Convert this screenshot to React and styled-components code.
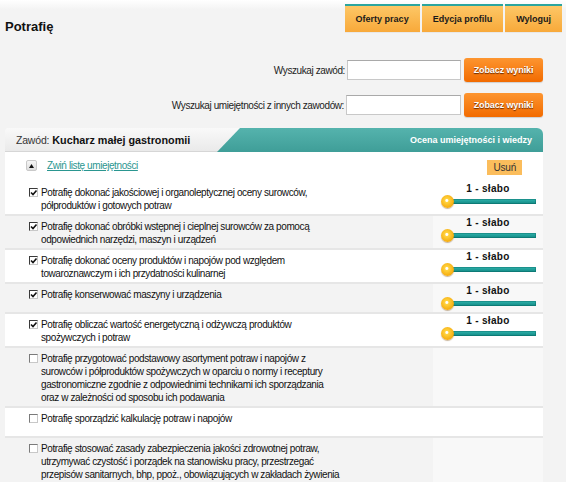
import styled, { createGlobalStyle } from 'styled-components';

const GlobalStyle = createGlobalStyle`
  body {
    margin: 0;
    background: #f3f3f3;
    font-family: 'Liberation Sans', Arial, sans-serif;
    color: #222;
  }
`;

const Page = styled.div`
  min-height: 482px;
  padding-left: 5px;
  background: linear-gradient(#ffffff 0, #f3f3f3 10px);
`;

const TopBar = styled.div`
  display: flex;
  align-items: flex-start;
  padding-top: 4px;
`;

const Title = styled.h1`
  margin: 15px 0 0;
  font-size: 13px;
  line-height: 16px;
  font-weight: bold;
  color: #111;
`;

const Nav = styled.nav`
  display: flex;
  gap: 2px;
  margin-left: auto;
  margin-right: 4px;
`;

const Tab = styled.a`
  display: flex;
  align-items: center;
  height: 26px;
  padding: 0 11px;
  border-top: 2px solid #2ba59e;
  background: linear-gradient(#fdc766, #f8a93a);
  font-size: 9px;
  font-weight: bold;
  color: #1a1a1a;
  box-shadow: 0 1px 0 #e8e8e8;
`;

const Search = styled.div`
  display: flex;
  flex-direction: column;
  gap: 11px;
  margin-top: 23px;
  padding-right: 23px;
`;

const SearchRow = styled.div`
  display: flex;
  justify-content: flex-end;
  align-items: center;
  height: 24px;
`;

const Label = styled.label`
  font-size: 10px;
  letter-spacing: -0.4px;
  color: #222;
`;

const Input = styled.input`
  box-sizing: border-box;
  width: ${(p) => p.$width || 113}px;
  height: 20px;
  margin-left: 2px;
  border: 1px solid #c8c8c8;
  border-top-color: #a9a9a9;
  background: #fff;
`;

const OrangeButton = styled.button`
  width: 79px;
  height: 24px;
  margin-left: 3px;
  border: none;
  border-radius: 3px;
  background: linear-gradient(#fd9530, #f26b00);
  color: #fff;
  font-family: inherit;
  font-size: 9px;
  font-weight: bold;
  letter-spacing: -0.1px;
  text-shadow: 0 1px 1px #6a2a00;
  box-shadow: 0 1px 1px rgba(0, 0, 0, 0.15);
`;

const Panel = styled.section`
  margin: 11px 23px 0 0;
`;

const Header = styled.div`
  display: flex;
  height: 24px;
  border-radius: 3px 5px 0 0;
  background: linear-gradient(#f9f9f9, #e9e9e9);
  box-shadow: inset 0 -1px 0 #d6d6d6;
`;

const Profession = styled.div`
  flex: 1;
  display: flex;
  align-items: center;
  gap: 3px;
  padding-left: 11px;
  font-size: 10.5px;
  letter-spacing: -0.2px;
  color: #333;

  strong {
    font-size: 10.8px;
    letter-spacing: 0;
    color: #111;
  }
`;

const TealTab = styled.div`
  display: flex;
  align-items: center;
  justify-content: flex-end;
  width: 326px;
  padding-right: 11px;
  box-sizing: border-box;
  border-top-right-radius: 6px;
  background: linear-gradient(#55b3ad, #3f9e98);
  clip-path: polygon(23px 0, 100% 0, 100% 100%, 0 100%);
  color: #fff;
  font-size: 9px;
  font-weight: bold;
`;

const Body = styled.div`
  background: #fff;
`;

const ToolRow = styled.div`
  display: flex;
  align-items: flex-start;
  height: 30px;
  box-sizing: border-box;
  padding: 8px 21px 0;
`;

const Toggle = styled.span`
  display: flex;
  align-items: center;
  justify-content: center;
  width: 11px;
  height: 11px;
  box-sizing: border-box;
  border: 1px solid #c9c9c9;
  border-radius: 2px;
  background: linear-gradient(#f6f6f6, #dedede);
`;

const ToggleLink = styled.a`
  margin: -1px 0 0 10px;
  font-size: 10px;
  letter-spacing: -0.4px;
  line-height: 13px;
  color: #2a9690;
  text-decoration: underline;
`;

const RemoveButton = styled.span`
  margin-left: auto;
  padding: 0 6px;
  height: 15px;
  line-height: 15px;
  background: #fbbd5c;
  font-size: 10px;
  letter-spacing: -0.2px;
  color: #333;
`;

const Row = styled.div`
  display: grid;
  grid-template-columns: 1fr 110px;
  background: ${(p) => (p.$shaded ? '#f3f3f3' : '#fff')};
  border-top: ${(p) => (p.$first ? 'none' : '2px solid #e6e6e6')};
  min-height: 28px;
`;

const Skill = styled.label`
  display: flex;
  align-items: flex-start;
  gap: 3px;
  padding: 4px 0 2px 24px;
`;

const Box = styled.span`
  flex: none;
  width: 9px;
  height: 9px;
  margin-top: 2px;
  box-sizing: border-box;
  border: 1px solid ${(p) => (p.$checked ? '#3a3a3a' : '#7a7a7a')};
  border-right-color: #c8c8c8;
  border-bottom-color: #c8c8c8;
  background: #fff;
  position: relative;

  svg {
    position: absolute;
    left: 0;
    top: 0;
  }
`;

const SkillText = styled.span`
  font-size: 10px;
  letter-spacing: -0.4px;
  line-height: 13px;
  color: #111;
  white-space: nowrap;
`;

const Line = styled.span`
  display: block;
`;

const RatingCell = styled.div`
  padding-top: 1px;
  background: ${(p) => (p.$shaded ? '#f8f8f8' : 'transparent')};
`;

const RatingLabel = styled.div`
  text-align: center;
  font-size: 10px;
  font-weight: bold;
  letter-spacing: 0.3px;
  line-height: 12px;
  color: #111;
`;

const Slider = styled.div`
  display: flex;
  align-items: center;
  margin-left: 8px;
  height: 13px;
`;

const Knob = styled.span`
  flex: none;
  width: 13px;
  height: 13px;
  border-radius: 50%;
  background: radial-gradient(circle at 45% 42%, #fff 0 1px, #ffd23e 2px, #f3a000 85%);
  box-shadow: 0 1px 1px rgba(120, 70, 0, 0.4);
  position: relative;
  z-index: 1;
`;

const Track = styled.span`
  width: 83px;
  height: 5px;
  margin-left: -1px;
  background: linear-gradient(#2fb3ad, #128883);
  box-shadow: inset 0 0 0 1px rgba(0, 90, 86, 0.35);
`;

const skills = [
  {
    lines: ['Potrafię dokonać jakościowej i organoleptycznej oceny surowców,', 'półproduktów i gotowych potraw'],
    checked: true,
  },
  {
    lines: ['Potrafię dokonać obróbki wstępnej i cieplnej surowców za pomocą', 'odpowiednich narzędzi, maszyn i urządzeń'],
    checked: true,
  },
  {
    lines: ['Potrafię dokonać oceny produktów i napojów pod względem', 'towaroznawczym i ich przydatności kulinarnej'],
    checked: true,
  },
  { lines: ['Potrafię konserwować maszyny i urządzenia'], checked: true },
  {
    lines: ['Potrafię obliczać wartość energetyczną i odżywczą produktów', 'spożywczych i potraw'],
    checked: true,
  },
  {
    lines: [
      'Potrafię przygotować podstawowy asortyment potraw i napojów z',
      'surowców i półproduktów spożywczych w oparciu o normy i receptury',
      'gastronomiczne zgodnie z odpowiednimi technikami ich sporządzania',
      'oraz w zależności od sposobu ich podawania',
    ],
    checked: false,
  },
  { lines: ['Potrafię sporządzić kalkulację potraw i napojów'], checked: false },
  {
    lines: [
      'Potrafię stosować zasady zabezpieczenia jakości zdrowotnej potraw,',
      'utrzymywać czystość i porządek na stanowisku pracy, przestrzegać',
      'przepisów sanitarnych, bhp, ppoż., obowiązujących w zakładach żywienia',
      'zbiorowego',
    ],
    checked: false,
  },
];

const Check = () => (
  <svg width="8" height="8" viewBox="0 0 8 8">
    <path d="M1 3.5 L3 5.5 L6.5 1.5" fill="none" stroke="#111" strokeWidth="1.6" />
  </svg>
);

const App = () => {
  return (
    <Page>
      <GlobalStyle />
      <TopBar>
        <Title>Potrafię</Title>
        <Nav>
          <Tab>Oferty pracy</Tab>
          <Tab>Edycja profilu</Tab>
          <Tab>Wyloguj</Tab>
        </Nav>
      </TopBar>

      <Search>
        <SearchRow>
          <Label>Wyszukaj zawód:</Label>
          <Input $width={114} />
          <OrangeButton>Zobacz wyniki</OrangeButton>
        </SearchRow>
        <SearchRow>
          <Label>Wyszukaj umiejętności z innych zawodów:</Label>
          <Input $width={115} />
          <OrangeButton>Zobacz wyniki</OrangeButton>
        </SearchRow>
      </Search>

      <Panel>
        <Header>
          <Profession>
            Zawód: <strong>Kucharz małej gastronomii</strong>
          </Profession>
          <TealTab>Ocena umiejętności i wiedzy</TealTab>
        </Header>
        <Body>
          <ToolRow>
            <Toggle>
              <svg width="5" height="4" viewBox="0 0 5 4">
                <path d="M2.5 0 L5 4 L0 4 Z" fill="#111" />
              </svg>
            </Toggle>
            <ToggleLink>Zwiń listę umiejętności</ToggleLink>
            <RemoveButton>Usuń</RemoveButton>
          </ToolRow>
          {skills.map((skill, i) => (
            <Row key={i} $shaded={i % 2 === 1} $first={i === 0}>
              <Skill>
                <Box $checked={skill.checked}>{skill.checked && <Check />}</Box>
                <SkillText>
                  {skill.lines.map((line) => (
                    <Line key={line}>{line}</Line>
                  ))}
                </SkillText>
              </Skill>
              <RatingCell $shaded={i % 2 === 1}>
                {skill.checked && (
                  <>
                    <RatingLabel>1 - słabo</RatingLabel>
                    <Slider>
                      <Knob />
                      <Track />
                    </Slider>
                  </>
                )}
              </RatingCell>
            </Row>
          ))}
        </Body>
      </Panel>
    </Page>
  );
};

export default App;
